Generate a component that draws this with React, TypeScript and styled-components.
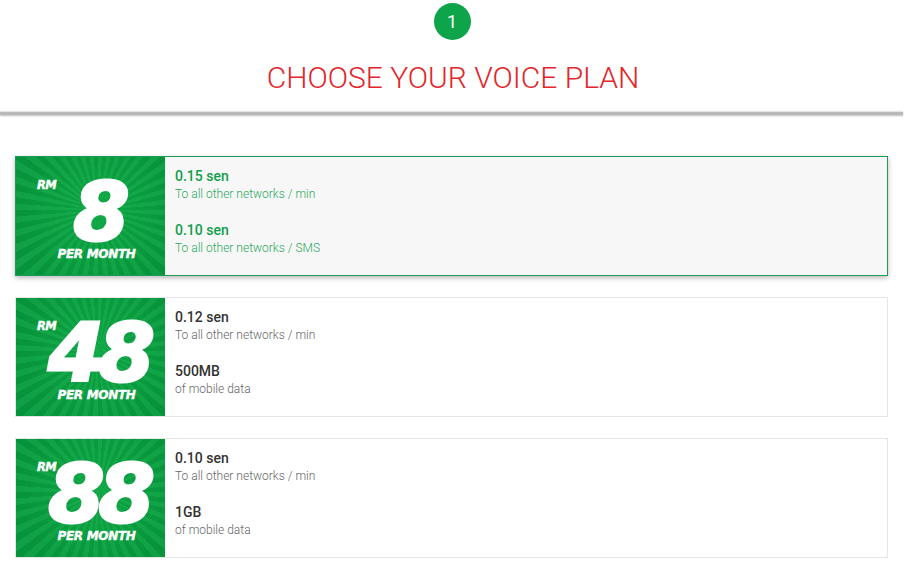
import styled, { createGlobalStyle, css } from 'styled-components';

interface IPlanLine {
  value: string;
  label: string;
}

interface IPlan {
  id: number;
  price: string;
  lines: IPlanLine[];
}

interface ISelectable {
  isActive: boolean;
}

const Plans: IPlan[] = [
  {
    id: 1,
    price: '8',
    lines: [
      { value: '0.15 sen', label: 'To all other networks / min' },
      { value: '0.10 sen', label: 'To all other networks / SMS' },
    ],
  },
  {
    id: 2,
    price: '48',
    lines: [
      { value: '0.12 sen', label: 'To all other networks / min' },
      { value: '500MB', label: 'of mobile data' },
    ],
  },
  {
    id: 3,
    price: '88',
    lines: [
      { value: '0.10 sen', label: 'To all other networks / min' },
      { value: '1GB', label: 'of mobile data' },
    ],
  },
];

const GlobalStyle = createGlobalStyle`
  body {
    margin: 0;
    background: #ffffff;
    font-family: Roboto, "Liberation Sans", sans-serif;
  }
`;

const Flex = css`
  display: flex;
`;

const Heavy = css`
  font-family: "DejaVu Sans", Lato, sans-serif;
  font-style: italic;
  font-weight: 700;
  -webkit-text-stroke: 0.4px #ffffff;
`;

const Page = styled.main`
  width: 906px;
  padding-top: 3px;
`;

const Header = styled.header`
  ${Flex}
  flex-direction: column;
  align-items: center;
`;

const Step = styled.div`
  ${Flex}
  align-items: center;
  justify-content: center;
  width: 37px;
  height: 37px;
  margin-right: 2px;
  border-radius: 50%;
  background: #0ea44a;
  color: #ffffff;
  font-size: 18px;
  font-weight: 400;
`;

const Title = styled.h1`
  margin: 20px 0 0;
  font-weight: 300;
  font-size: 30px;
  line-height: 36px;
  color: #e2262b;
`;

const Divider = styled.hr`
  margin: 15px 3px 0 0;
  height: 3px;
  border: none;
  border-top: 1px solid #e4e4e4;
  background: #b9b9b9;
  box-shadow: 0 1px 2px rgba(0, 0, 0, 0.25);
`;

const List = styled.section`
  ${Flex}
  flex-direction: column;
  gap: 21px;
  width: 873px;
  margin: 41px 0 0 15px;
`;

const Card = styled.article<ISelectable>`
  ${Flex}
  height: 120px;
  box-sizing: border-box;
  border: 1px solid ${(props) => (props.isActive ? '#1d9a55' : '#e6e6e6')};
  background: ${(props) => (props.isActive ? '#f7f7f7' : '#ffffff')};
  box-shadow: ${(props) =>
    props.isActive ? '0 2px 5px rgba(0, 0, 0, 0.28)' : 'none'};
`;

const Badge = styled.div`
  position: relative;
  ${Flex}
  flex-direction: column;
  align-items: center;
  box-sizing: border-box;
  width: 149px;
  padding-left: 12px;
  flex-shrink: 0;
  color: #ffffff;
  background:
    radial-gradient(circle at 55% 45%, rgba(40, 200, 90, 0.22), rgba(0, 0, 0, 0.05) 80%),
    repeating-conic-gradient(from 0deg at 55% 45%, #10a848 0deg 4.5deg, #079b3e 4.5deg 9deg);
  overflow: hidden;
`;

const Currency = styled.span`
  ${Heavy}
  position: absolute;
  left: 21px;
  top: 21px;
  font-size: 11.5px;
  line-height: 14px;
  letter-spacing: -0.5px;
`;

const Price = styled.span`
  ${Heavy}
  -webkit-text-stroke: 3px #ffffff;
  margin-top: 20px;
  padding-left: 4px;
  font-size: 81px;
  line-height: 70px;
  letter-spacing: -6px;
`;

const Period = styled.span`
  ${Heavy}
  margin-top: 1px;
  font-size: 12px;
  line-height: 12px;
  letter-spacing: -0.3px;
`;

const Details = styled.div`
  ${Flex}
  flex-direction: column;
  gap: 18px;
  padding: 10px 0 0 10px;
`;

const Line = styled.div`
  ${Flex}
  flex-direction: column;
`;

const Value = styled.span<ISelectable>`
  font-size: 14px;
  line-height: 18px;
  font-weight: 500;
  color: ${(props) => (props.isActive ? '#119e4b' : '#333333')};
`;

const Label = styled.span<ISelectable>`
  font-size: 12px;
  line-height: 18px;
  font-weight: 300;
  color: ${(props) => (props.isActive ? '#2aa860' : '#666666')};
`;

const App = () => {
  return (
    <Page>
      <GlobalStyle />
      <Header>
        <Step>1</Step>
        <Title>CHOOSE YOUR VOICE PLAN</Title>
      </Header>
      <Divider />
      <List>
        {Plans.map((plan: IPlan, index: number) => {
          const isActive = index === 0;
          return (
            <Card key={plan.id} isActive={isActive}>
              <Badge>
                <Currency>RM</Currency>
                <Price>{plan.price}</Price>
                <Period>PER MONTH</Period>
              </Badge>
              <Details>
                {plan.lines.map((line: IPlanLine) => (
                  <Line key={line.value}>
                    <Value isActive={isActive}>{line.value}</Value>
                    <Label isActive={isActive}>{line.label}</Label>
                  </Line>
                ))}
              </Details>
            </Card>
          );
        })}
      </List>
    </Page>
  );
};

export default App;
